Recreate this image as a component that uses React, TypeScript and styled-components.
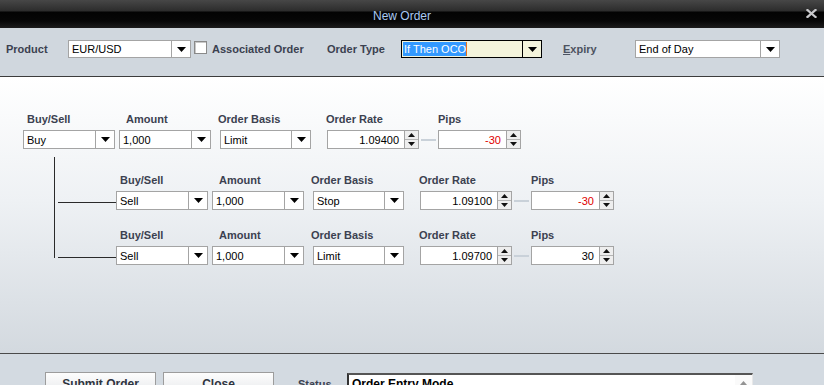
import styled, { createGlobalStyle } from 'styled-components'

const GlobalStyle = createGlobalStyle`
  *, *::before, *::after { box-sizing: border-box; }
  html, body { margin: 0; padding: 0; background: #d3dae1; }
  body { font-family: "Liberation Sans", Arial, sans-serif; }
`

type Leg = {
  side: string
  amount: string
  basis: string
  rate: string
  pips: string
}

const mainLeg: Leg = { side: 'Buy', amount: '1,000', basis: 'Limit', rate: '1.09400', pips: '-30' }

const ocoLegs: Leg[] = [
  { side: 'Sell', amount: '1,000', basis: 'Stop', rate: '1.09100', pips: '-30' },
  { side: 'Sell', amount: '1,000', basis: 'Limit', rate: '1.09700', pips: '30' },
]

const DownArrow = () => (
  <svg width="9" height="5" viewBox="0 0 9 5">
    <polygon points="0,0 9,0 4.5,5" fill="#000" />
  </svg>
)

const SpinArrow = ({ up }: { up?: boolean }) => (
  <svg width="7" height="4" viewBox="0 0 7 4">
    <polygon points={up ? '0,4 7,4 3.5,0' : '0,0 7,0 3.5,4'} fill="#111" />
  </svg>
)

const ComboBox = ({ value, width, height = 19 }: { value: string; width: number; height?: number }) => (
  <Combo $w={width} $h={height}>
    <ComboValue>{value}</ComboValue>
    <ComboArrow>
      <DownArrow />
    </ComboArrow>
  </Combo>
)

const Spinner = ({ value, width, negative }: { value: string; width: number; negative?: boolean }) => (
  <SpinBox $w={width}>
    <SpinValue $negative={negative}>{value}</SpinValue>
    <SpinButtons>
      <SpinHalf>
        <SpinArrow up />
      </SpinHalf>
      <SpinHalf>
        <SpinArrow />
      </SpinHalf>
    </SpinButtons>
  </SpinBox>
)

const LegRow = ({ leg }: { leg: Leg }) => (
  <Row>
    <Field $w={92}>
      <FieldLabel $shift={4}>Buy/Sell</FieldLabel>
      <ComboBox value={leg.side} width={92} />
    </Field>
    <Field $w={92} $gap={4}>
      <FieldLabel $shift={7}>Amount</FieldLabel>
      <ComboBox value={leg.amount} width={92} />
    </Field>
    <Field $w={91} $gap={9}>
      <FieldLabel $shift={-2}>Order Basis</FieldLabel>
      <ComboBox value={leg.basis} width={91} />
    </Field>
    <Field $w={92} $gap={16}>
      <FieldLabel $shift={-1}>Order Rate</FieldLabel>
      <Spinner value={leg.rate} width={92} />
    </Field>
    <Connector />
    <Field $w={83}>
      <FieldLabel>Pips</FieldLabel>
      <Spinner value={leg.pips} width={83} negative={leg.pips.startsWith('-')} />
    </Field>
  </Row>
)

export default function App() {
  return (
    <>
      <GlobalStyle />
      <Window>
        <TitleBar>
          <Title>New Order</Title>
          <CloseButton>
            <svg width="11" height="9" viewBox="0 0 11 9">
              <path d="M1.5 1 L9.5 8 M9.5 1 L1.5 8" stroke="#c9c9cc" strokeWidth="2.3" strokeLinecap="square" />
            </svg>
          </CloseButton>
        </TitleBar>

        <Toolbar>
          <BarLabel $w={62}>Product</BarLabel>
          <ComboBox value="EUR/USD" width={123} height={18} />
          <CheckBox />
          <BarLabel $w={115}>Associated Order</BarLabel>
          <BarLabel $w={74}>Order Type</BarLabel>
          <TypeCombo>
            <TypeValue>
              <Selected>If Then OCO</Selected>
              <Caret />
            </TypeValue>
            <TypeArrow>
              <DownArrow />
            </TypeArrow>
          </TypeCombo>
          <BarLabel $w={72} $muted $gap={21}>
            <u>E</u>xpiry
          </BarLabel>
          <ComboBox value="End of Day" width={145} height={18} />
        </Toolbar>

        <Body>
          <LegRow leg={mainLeg} />
          <Tree>
            <Stem />
            <Branches>
              {ocoLegs.map((leg, i) => (
                <BranchRow key={i}>
                  <Branch />
                  <LegRow leg={leg} />
                </BranchRow>
              ))}
            </Branches>
          </Tree>
        </Body>

        <Footer>
          <ActionButton>Submit Order</ActionButton>
          <ActionButton>Close</ActionButton>
          <StatusLabel>Status</StatusLabel>
          <StatusBox>
            <StatusText>Order Entry Mode</StatusText>
            <ScrollTrack>
              <SpinArrow up />
            </ScrollTrack>
          </StatusBox>
        </Footer>
      </Window>
    </>
  )
}

const Window = styled.div`
  width: 824px;
  height: 385px;
  overflow: hidden;
  display: flex;
  flex-direction: column;
  background: #d3dae1;
`

const TitleBar = styled.div`
  height: 28px;
  flex-shrink: 0;
  display: flex;
  align-items: center;
  background: linear-gradient(
    to bottom,
    #474747 0px,
    #2c2c2c 11px,
    #030303 12px,
    #070707 21px,
    #1c1c1c 28px
  );
`

const Title = styled.div`
  flex: 1;
  padding: 3px 0 0 6px;
  text-align: center;
  color: #a9c9f2;
  font-size: 12px;
`

const CloseButton = styled.div`
  width: 26px;
  display: flex;
  justify-content: center;
  padding-bottom: 1px;
`

const Toolbar = styled.div`
  height: 49px;
  flex-shrink: 0;
  display: flex;
  align-items: flex-start;
  padding: 12px 0 0 6px;
  background: #d0d7de;
  border-bottom: 1px solid #3c3c3c;
`

const BarLabel = styled.div<{ $w: number; $muted?: boolean; $gap?: number }>`
  width: ${p => p.$w}px;
  margin-left: ${p => p.$gap ?? 0}px;
  line-height: 18px;
  font-size: 11px;
  font-weight: bold;
  color: ${p => (p.$muted ? '#4c5260' : '#3b4150')};
  white-space: nowrap;
  u { text-decoration: underline; }
`

const CheckBox = styled.div`
  width: 13px;
  height: 13px;
  margin: 1px 5px 0 3px;
  background: #fff;
  border: 1px solid #8a8a8a;
  box-shadow: inset 1px 1px 0 #c8c8c8;
`

const Combo = styled.div<{ $w: number; $h: number }>`
  width: ${p => p.$w}px;
  height: ${p => p.$h}px;
  display: flex;
  background: #fff;
  border: 1px solid #a4a4a4;
  font-size: 11px;
  color: #000;
`

const ComboValue = styled.div`
  flex: 1;
  padding-left: 3px;
  display: flex;
  align-items: center;
  white-space: nowrap;
  overflow: hidden;
`

const ComboArrow = styled.div`
  width: 19px;
  border-left: 1px solid #a4a4a4;
  display: flex;
  align-items: center;
  justify-content: center;
`

const TypeCombo = styled.div`
  width: 141px;
  height: 18px;
  display: flex;
  background: #f4f4dc;
  border: 1px solid #000;
  font-size: 11px;
`

const TypeValue = styled.div`
  flex: 1;
  display: flex;
  align-items: stretch;
  padding: 1px 0 1px 1px;
`

const Selected = styled.span`
  background: #3399ff;
  color: #fff;
  padding: 0 0 0 1px;
  line-height: 14px;
`

const Caret = styled.span`
  width: 1px;
  background: #e8731e;
`

const TypeArrow = styled.div`
  width: 19px;
  border-left: 1px solid #000;
  display: flex;
  align-items: center;
  justify-content: center;
`

const Body = styled.div`
  flex: 1;
  padding: 36px 0 0 23px;
  background: linear-gradient(to bottom, #ffffff 0%, #eef1f4 45%, #d3d9df 100%);
  border-bottom: 1px solid #4a4a4a;
`

const Row = styled.div`
  display: flex;
  align-items: flex-end;
`

const Field = styled.div<{ $w: number; $gap?: number }>`
  width: ${p => p.$w}px;
  margin-left: ${p => p.$gap ?? 0}px;
  display: flex;
  flex-direction: column;
`

const FieldLabel = styled.div<{ $shift?: number }>`
  height: 13px;
  line-height: 13px;
  margin: 0 0 4px ${p => p.$shift ?? 0}px;
  font-size: 11px;
  font-weight: bold;
  color: #3b4150;
  white-space: nowrap;
`

const SpinBox = styled.div<{ $w: number }>`
  width: ${p => p.$w}px;
  height: 19px;
  display: flex;
  background: #fff;
  border: 1px solid #a4a4a4;
  font-size: 11px;
`

const SpinValue = styled.div<{ $negative?: boolean }>`
  flex: 1;
  display: flex;
  align-items: center;
  justify-content: flex-end;
  padding-right: 5px;
  color: ${p => (p.$negative ? '#e00000' : '#000')};
`

const SpinButtons = styled.div`
  width: 14px;
  display: flex;
  flex-direction: column;
  border-left: 1px solid #a4a4a4;
  background: #eeeeee;
`

const SpinHalf = styled.div`
  flex: 1;
  display: flex;
  align-items: center;
  justify-content: center;
  & + & { border-top: 1px solid #b4b4b4; }
`

const Connector = styled.div`
  width: 19px;
  height: 19px;
  padding: 0 2px;
  display: flex;
  align-items: center;
  &::after {
    content: '';
    flex: 1;
    height: 2px;
    background: #c9d1d9;
  }
`

const Tree = styled.div`
  display: flex;
  margin: 8px 0 0 31px;
`

const Stem = styled.div`
  width: 1px;
  margin-bottom: 7px;
  background: #2a2a2a;
`

const Branches = styled.div`
  display: flex;
  flex-direction: column;
  gap: 19px;
  padding-top: 17px;
`

const BranchRow = styled.div`
  display: flex;
  align-items: flex-end;
`

const Branch = styled.div`
  width: 58px;
  height: 12px;
  margin: 0 0 7px 3px;
  border-bottom: 1px solid #2a2a2a;
`

const Footer = styled.div`
  height: 31px;
  flex-shrink: 0;
  display: flex;
  align-items: flex-start;
  padding: 18px 0 0 45px;
  background: #d3dae1;
`

const ActionButton = styled.div`
  width: 111px;
  height: 26px;
  margin-right: 7px;
  display: flex;
  justify-content: center;
  padding-top: 4px;
  font-size: 12px;
  font-weight: bold;
  color: #2e3440;
  border: 1px solid #9c9c9c;
  background: linear-gradient(to bottom, #fdfdfd, #e4e6e9);
`

const StatusLabel = styled.div`
  margin: 6px 0 0 17px;
  width: 49px;
  font-size: 11px;
  font-weight: bold;
  color: #3b4150;
`

const StatusBox = styled.div`
  width: 406px;
  height: 40px;
  margin-top: 1px;
  display: flex;
  background: #fff;
  border-top: 2px solid #555;
  border-left: 2px solid #333;
  border-right: 1px solid #e8e8e8;
`

const StatusText = styled.div`
  flex: 1;
  padding: 2px 0 0 3px;
  font-size: 12px;
  font-weight: bold;
  color: #000;
`

const ScrollTrack = styled.div`
  width: 17px;
  display: flex;
  justify-content: center;
  padding-top: 6px;
  background: #f4f4f4;
  opacity: 0.45;
`
